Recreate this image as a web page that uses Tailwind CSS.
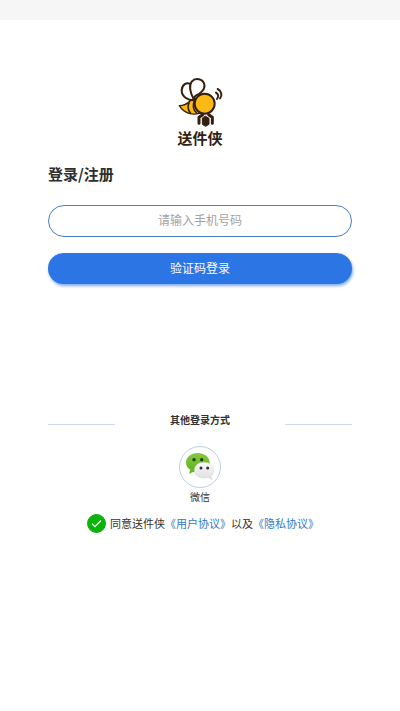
<!DOCTYPE html>
<html lang="zh-CN">
<head>
<meta charset="utf-8">
<meta name="viewport" content="width=device-width, initial-scale=1">
<title>登录/注册</title>
<script src="https://cdn.jsdelivr.net/npm/@tailwindcss/browser@4"></script>
</head>
<body class="min-h-screen bg-white font-['Noto_Sans_CJK_SC',sans-serif] text-[#333]">
<div class="h-5 bg-[#f6f6f6]"></div>
<main class="px-12 pt-[50px]">
  <div class="flex flex-col items-center">
    <svg class="h-[60px] w-[60px]" viewBox="0 0 180 180" fill="none" stroke="#33200f" stroke-linecap="round" stroke-linejoin="round" aria-hidden="true">
      <path d="M28 107C42 107 52 101 61 92L86 84L88 130C66 136 42 130 28 107Z" fill="#fdb913" stroke-width="4"/>
      <path d="M57 98C52 110 54 120 61 129M73 94C67 106 70 120 80 129" stroke-width="5"/>
      <circle cx="104" cy="101" r="30" fill="#fdb913" stroke-width="6"/>
      <path d="M72 91C53 91 35 80 35 61C36 44 50 35 62 42C71 49 73 70 72 91Z" fill="#fff" stroke-width="6"/>
      <path d="M72 90C61 69 55 49 65 35C76 22 99 26 103 43C106 58 92 71 77 77C73 80 72 84 72 90Z" fill="#fff" stroke-width="6"/>
      <path d="M138 68C145 73 147 79 141 87M143 57C154 63 158 75 150 85" stroke-width="6"/>
      <path d="M87 160V142L98 134M127 160V142L116 134" stroke-width="9"/>
      <path d="M107 139L117 145V163L107 169L97 163V145Z" fill="#33200f" stroke-width="3"/>
    </svg>
    <p class="-mt-1 text-[15px] leading-6 font-bold text-[#33200f]">送件侠</p>
  </div>
  <form>
    <h1 class="mt-3 text-[15px] leading-6 font-bold text-[#2e2e2e]">登录/注册</h1>
    <input type="tel" aria-label="手机号码" placeholder="请输入手机号码" class="mt-[19px] block h-8 w-full rounded-full border border-[#4a80bd] bg-white px-4 pb-1 text-center text-xs text-[#333] outline-none placeholder:text-[#a3a3a3]">
    <button type="button" class="mt-4 block h-[31px] w-full rounded-full bg-[#2b75e4] pb-0.5 text-xs text-white shadow-[1px_2px_3px_#2b75e499]">验证码登录</button>
  </form>
  <section class="mt-32">
    <div class="flex items-center justify-between">
      <span class="mt-2 h-px w-[67px] bg-[#cdd9f0]"></span>
      <h2 class="text-[10px] leading-4 font-bold text-[#333]">其他登录方式</h2>
      <span class="mt-2 h-px w-[67px] bg-[#cdd9f0]"></span>
    </div>
    <button type="button" class="mx-auto mt-[18px] flex flex-col items-center text-[10px] leading-4">
      <span class="flex size-[42px] items-center justify-center rounded-full border border-[#bccfe8]">
        <svg class="size-10" viewBox="0 0 120 120" aria-hidden="true">
          <defs>
            <linearGradient id="green" x2="0" y2="1"><stop stop-color="#86c83e"/><stop offset="1" stop-color="#60b01c"/></linearGradient>
            <linearGradient id="gray" x2="0" y2="1"><stop stop-color="#fafafa"/><stop offset="1" stop-color="#dedede"/></linearGradient>
          </defs>
          <path d="M53 18C33 18 18 31 18 47C18 56 23 63 31 68L27 80L41 74C45 76 49 76 53 76C74 76 89 63 89 47S74 18 53 18Z" fill="url(#green)"/>
          <circle cx="42" cy="38" r="5" fill="#203b12"/><circle cx="65" cy="38" r="5" fill="#203b12"/>
          <path d="M72 46C55 46 43 56 43 70S55 93 72 93C76 93 80 92 84 91L96 98L93 87C99 83 101 77 101 70C101 56 89 46 72 46Z" fill="url(#gray)" stroke="#c8c8c8"/>
          <circle cx="63" cy="63" r="4.5" fill="#303030"/><circle cx="83" cy="63" r="4.5" fill="#303030"/>
        </svg>
      </span>
      <span class="mt-px">微信</span>
    </button>
  </section>
  <div class="mt-2 flex items-center justify-center gap-1 text-[11px] leading-5 whitespace-nowrap">
    <span class="relative ml-1.5 flex size-[19px]">
      <input id="agree" type="checkbox" checked class="size-full appearance-none rounded-full border border-[#bbb] checked:border-[#09b307] checked:bg-[#09b307]">
      <svg class="pointer-events-none absolute inset-0 size-full" viewBox="0 0 19 19" fill="none" stroke="#fff" stroke-width="1.3" aria-hidden="true"><path d="M5 9.8L8 12.7L14 6.5"/></svg>
    </span>
    <p><label for="agree">同意送件侠</label><a href="#" class="text-[#3478c4]">《用户协议》</a>以及<a href="#" class="text-[#3478c4]">《隐私协议》</a></p>
  </div>
</main>
</body>
</html>
